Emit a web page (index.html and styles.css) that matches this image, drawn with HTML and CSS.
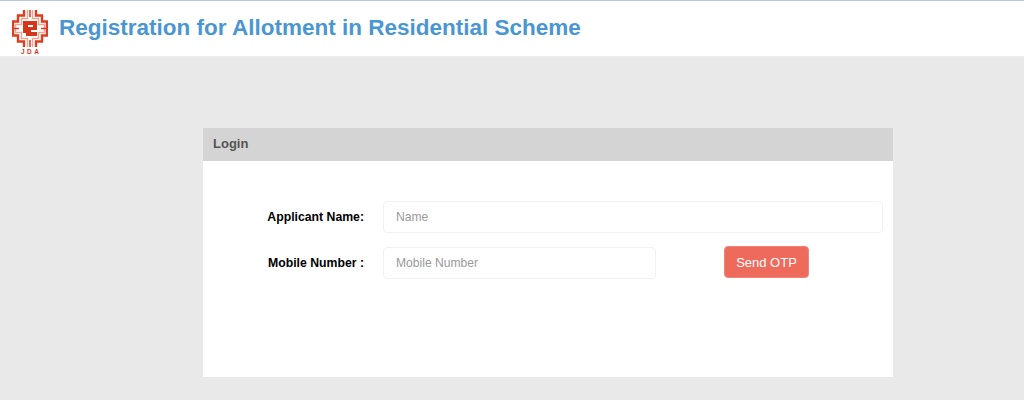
FILE: index.html
```html
<!DOCTYPE html>
<html lang="en">
<head>
  <meta charset="UTF-8">
  <title>Registration for Allotment in Residential Scheme</title>
  <link rel="stylesheet" href="styles.css">
</head>
<body>
  <header class="top-bar">
    <div class="logo">
      <svg class="logo-mark" viewBox="0 0 36 37" width="36" height="37" fill="none">
        <path stroke="#f2a593" stroke-width="1.4" d="M15.5 0v8.5h-6v6H3.500v8h6v6h6v8.500M20.500 0v8.500h6v6h6v8h-6v6h-6v8.500"/>
        <path stroke="#dc3d20" stroke-width="2.400" d="M12 0v5.500H6v6H1v14h5v6h6v5.500M24 0v5.500h6v6h5v14h-5v6h-6v5.500"/>
        <path stroke="#dc3d20" stroke-width="1.500" d="M18 0v7M18 30v7M0 18.500h7M29 18.500h7"/>
        <rect x="11" y="11" width="14" height="15" fill="#d6351a"/>
        <path fill="#fff" d="M16 15h5v2h-5zM19 20h6v2h-6zM11 23h3v3h-3z"/>
      </svg>
      <span class="logo-text">JDA</span>
    </div>
    <h1 class="page-title">Registration for Allotment in Residential Scheme</h1>
  </header>
  <main class="page-body">
    <section class="panel">
      <div class="panel-heading">Login</div>
      <form class="panel-body">
        <div class="form-row">
          <label class="form-label" for="applicantName">Applicant Name:</label>
          <input class="form-input" id="applicantName" type="text" placeholder="Name">
        </div>
        <div class="form-row">
          <label class="form-label" for="mobileNumber">Mobile Number :</label>
          <input class="form-input mobile-input" id="mobileNumber" type="text" placeholder="Mobile Number">
          <button class="otp-btn" type="button">Send OTP</button>
        </div>
      </form>
    </section>
  </main>
</body>
</html>
```
FILE: styles.css
```css
html, body {
  height: 100%;
}
body {
  margin: 0;
  font-family: "Liberation Sans", Arial, sans-serif;
  background: #e9e9e9;
  overflow: hidden;
}
.top-bar {
  display: flex;
  align-items: flex-start;
  height: 55px;
  background: #fff;
  border-top: 1px solid #b9c9dc;
  border-bottom: 1px solid #ececec;
  padding-left: 12px;
}
.logo {
  display: flex;
  flex-direction: column;
  align-items: center;
  width: 36px;
  padding-top: 9px;
}
.logo-mark {
  display: block;
}
.logo-text {
  font-size: 6.5px;
  line-height: 7px;
  font-weight: bold;
  letter-spacing: 2.5px;
  margin-right: -2.5px;
  color: #d8341a;
  margin-top: 1px;
}
.page-title {
  margin: 13px 0 0 11px;
  font-size: 22.5px;
  line-height: 28px;
  font-weight: bold;
  color: #4a96d2;
}
.page-body {
  display: flex;
  justify-content: center;
  padding: 71px 131px 0 203px;
}
.panel {
  width: 690px;
  height: 249px;
  background: #fff;
}
.panel-heading {
  height: 33px;
  line-height: 31px;
  padding-left: 10px;
  background: #d4d4d4;
  font-size: 13px;
  font-weight: bold;
  color: #555;
}
.panel-body {
  padding: 40px 10px 0 0;
}
.form-row {
  display: flex;
  align-items: center;
  margin-bottom: 14px;
}
.form-label {
  width: 161px;
  margin-right: 19px;
  text-align: right;
  font-size: 12.25px;
  font-weight: bold;
  color: #000;
}
.form-input {
  flex: 1;
  height: 32px;
  box-sizing: border-box;
  padding: 0 12px;
  border: 1px solid #f1f1f1;
  border-radius: 4px;
  font-family: inherit;
  font-size: 12.1px;
  color: #333;
  outline: none;
}
.form-input::placeholder {
  color: #999;
}
.mobile-input {
  flex: none;
  width: 273px;
}
.otp-btn {
  align-self: flex-start;
  width: 85px;
  height: 32px;
  margin: -1px 0 0 68px;
  padding: 0;
  background: #ee6b5b;
  border: 1px solid #f2857a;
  border-radius: 4px;
  color: #fff;
  font-family: inherit;
  font-size: 13px;
}
```
